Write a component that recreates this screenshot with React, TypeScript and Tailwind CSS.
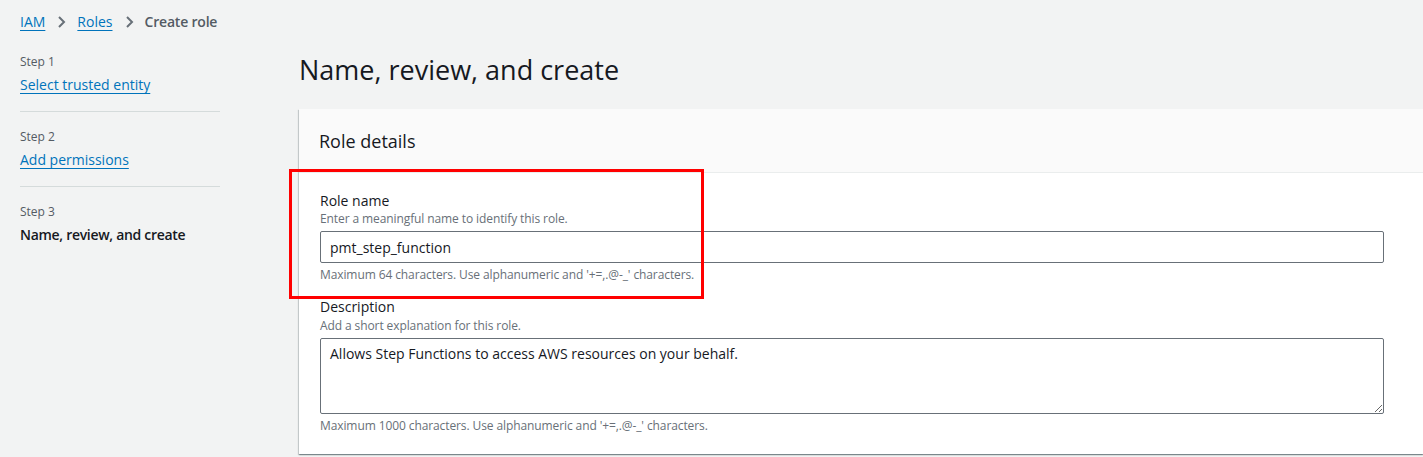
const linkCls = 'text-[#0073bb] underline underline-offset-[3px] decoration-1'

function Chevron() {
  return (
    <svg width="16" height="16" viewBox="0 0 16 16" className="mx-[8px] text-[#687078]">
      <path d="M6 3l5 5-5 5" fill="none" stroke="currentColor" strokeWidth="2" />
    </svg>
  )
}

function StepNav() {
  return (
    <div className="w-[200px] shrink-0">
      <div className="pt-[54px] pb-[16px] border-b border-[#d5dbdb]">
        <div className="text-[12px] leading-[16px] text-[#545b64]">Step 1</div>
        <a className={`${linkCls} mt-[5px] block text-[14px] leading-[20px]`}>Select trusted entity</a>
      </div>
      <div className="pt-[17px] pb-[16px] border-b border-[#d5dbdb]">
        <div className="text-[12px] leading-[16px] text-[#545b64]">Step 2</div>
        <a className={`${linkCls} mt-[5px] block text-[14px] leading-[20px]`}>Add permissions</a>
      </div>
      <div className="pt-[17px]">
        <div className="text-[12px] leading-[16px] text-[#545b64]">Step 3</div>
        <div className="mt-[5px] text-[14px] leading-[20px] font-semibold tracking-[-0.3px] text-[#16191f]">
          Name, review, and create
        </div>
      </div>
    </div>
  )
}

export default function App() {
  return (
    <div
      className="relative h-[457px] w-[1423px] overflow-hidden bg-[#f2f3f3] text-[#16191f]"
      style={{ fontFamily: '"Open Sans", "Noto Sans", sans-serif' }}
    >
      <div className="absolute left-[20px] top-[12px] flex items-center text-[14px] leading-[20px]">
        <a className={linkCls}>IAM</a>
        <Chevron />
        <a className={linkCls}>Roles</a>
        <Chevron />
        <span className="font-semibold tracking-[-0.2px] text-[#545b64]">Create role</span>
      </div>

      <div className="flex pl-[20px]">
        <StepNav />
        <div className="ml-[79px] flex-1">
          <h1 className="pt-[52px] text-[27px] leading-[36px] text-[#16191f]">Name, review, and create</h1>
          <div className="mt-[21px] bg-white shadow-[0_1px_1px_0_rgba(0,28,36,0.3),1px_1px_1px_0_rgba(0,28,36,0.15),-1px_1px_1px_0_rgba(0,28,36,0.15)]">
            <div className="h-[64px] bg-[#fafafa] border-b border-[#eaeded] px-[20px] flex items-center text-[18px] leading-[24px]">
              Role details
            </div>
            <div className="pl-[21px] pr-[39px] pt-[18px] pb-[20px]">
              <div className="text-[14px] leading-[20px]">Role name</div>
              <div className="text-[12px] leading-[16px] tracking-[-0.1px] text-[#687078]">
                Enter a meaningful name to identify this role.
              </div>
              <div className="mt-[4px] h-[32px] border border-[#687078] rounded-[2px] px-[9px] flex items-center text-[14px]">
                pmt_step_function
              </div>
              <div className="mt-[4px] text-[12px] leading-[16px] tracking-[-0.1px] text-[#687078]">
                Maximum 64 characters. Use alphanumeric and '+=,.@-_' characters.
              </div>
              <div className="mt-[14px] text-[14px] leading-[20px]">Description</div>
              <div className="mt-[1px] text-[12px] leading-[16px] tracking-[-0.1px] text-[#687078]">
                Add a short explanation for this role.
              </div>
              <textarea
                readOnly
                className="mt-[4px] block h-[76px] w-full border border-[#687078] rounded-[2px] px-[9px] py-[4px] text-[14px] leading-[22px] outline-none resize-y"
                defaultValue="Allows Step Functions to access AWS resources on your behalf."
              />
              <div className="mt-[4px] text-[12px] leading-[16px] tracking-[-0.1px] text-[#687078]">
                Maximum 1000 characters. Use alphanumeric and '+=,.@-_' characters.
              </div>
            </div>
          </div>
        </div>
      </div>

      <div className="pointer-events-none absolute left-[289px] top-[169px] h-[130px] w-[415px] border-[3px] border-[#ff0000]" />
    </div>
  )
}
